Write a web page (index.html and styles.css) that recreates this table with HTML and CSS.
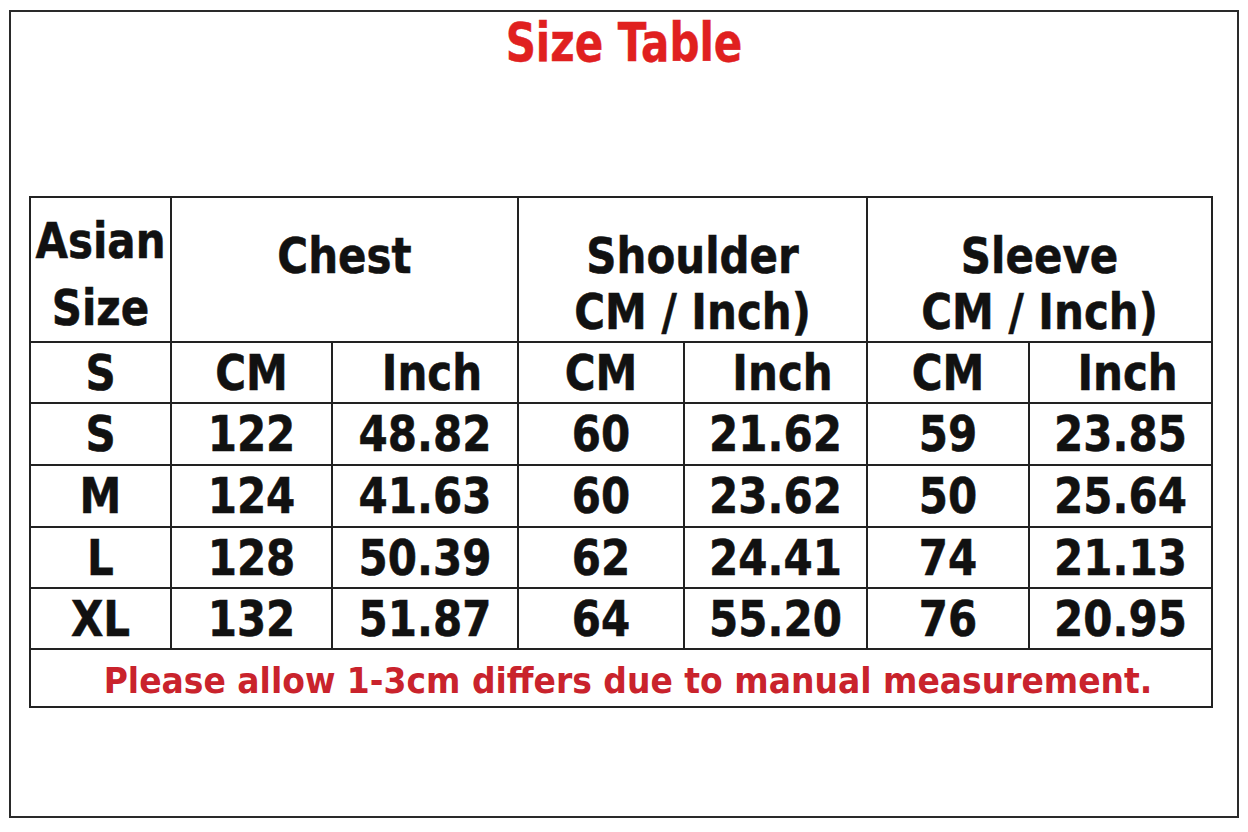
FILE: index.html
```html
<!DOCTYPE html>
<html lang="en">
<head>
<meta charset="utf-8">
<title>Size Table</title>
<link rel="stylesheet" href="styles.css">
</head>
<body>
<div class="frame">
  <h1 class="title"><span class="st">Size Table</span></h1>
  <table class="size-table">
    <colgroup>
      <col class="w-size">
      <col class="w-chest-cm">
      <col class="w-chest-in">
      <col class="w-sh-cm">
      <col class="w-sh-in">
      <col class="w-sl-cm">
      <col class="w-sl-in">
    </colgroup>
    <thead>
      <tr class="head">
        <th class="h-size"><span class="st">Asian</span><br><span class="st">Size</span></th>
        <th colspan="2" class="h-group"><span class="st">Chest</span></th>
        <th colspan="2" class="h-group"><span class="st">Shoulder</span><br><span class="st">CM / Inch)</span></th>
        <th colspan="2" class="h-group"><span class="st">Sleeve</span><br><span class="st">CM / Inch)</span></th>
      </tr>
      <tr class="sub">
        <th><span class="st">S</span></th>
        <th><span class="st">CM</span></th>
        <th class="inch"><span class="st">Inch</span></th>
        <th><span class="st">CM</span></th>
        <th class="inch"><span class="st">Inch</span></th>
        <th><span class="st">CM</span></th>
        <th class="inch"><span class="st">Inch</span></th>
      </tr>
    </thead>
    <tbody>
      <tr class="row">
        <td><span class="st">S</span></td>
        <td><span class="st">122</span></td>
        <td><span class="st">48.82</span></td>
        <td><span class="st">60</span></td>
        <td><span class="st">21.62</span></td>
        <td><span class="st">59</span></td>
        <td><span class="st">23.85</span></td>
      </tr>
      <tr class="row">
        <td><span class="st">M</span></td>
        <td><span class="st">124</span></td>
        <td><span class="st">41.63</span></td>
        <td><span class="st">60</span></td>
        <td><span class="st">23.62</span></td>
        <td><span class="st">50</span></td>
        <td><span class="st">25.64</span></td>
      </tr>
      <tr class="row row-short">
        <td><span class="st">L</span></td>
        <td><span class="st">128</span></td>
        <td><span class="st">50.39</span></td>
        <td><span class="st">62</span></td>
        <td><span class="st">24.41</span></td>
        <td><span class="st">74</span></td>
        <td><span class="st">21.13</span></td>
      </tr>
      <tr class="row row-short">
        <td><span class="st">XL</span></td>
        <td><span class="st">132</span></td>
        <td><span class="st">51.87</span></td>
        <td><span class="st">64</span></td>
        <td><span class="st">55.20</span></td>
        <td><span class="st">76</span></td>
        <td><span class="st">20.95</span></td>
      </tr>
    </tbody>
    <tfoot>
      <tr class="note">
        <td colspan="7"><span class="st-note">Please allow 1-3cm differs due to manual measurement.</span></td>
      </tr>
    </tfoot>
  </table>
</div>
</body>
</html>
```

FILE: styles.css
```css
html, body {
  margin: 0;
  padding: 0;
  background: #ffffff;
}

body {
  font-family: "DejaVu Sans", Verdana, sans-serif;
  font-weight: bold;
  color: #111111;
}

.frame {
  box-sizing: border-box;
  width: 1230px;
  height: 808px;
  margin: 10px 0 0 9px;
  border: 2px solid #2a2a2a;
}

.title {
  margin: 0;
  height: 62px;
  line-height: 62px;
  text-align: center;
  font-size: 42px;
  font-weight: bold;
  color: #e0201f;
}

.title .st {
  transform: scaleY(1.25);
  -webkit-text-stroke: 0.4px #e0201f;
}

.st {
  display: inline-block;
  transform: scaleY(1.2);
  -webkit-text-stroke: 0.5px #111111;
}

.size-table {
  border-collapse: collapse;
  table-layout: fixed;
  width: 1183px;
  margin: 122px 0 0 18px;
}

.w-size { width: 141px; }
.w-chest-cm { width: 161px; }
.w-chest-in { width: 186px; }
.w-sh-cm { width: 166px; }
.w-sh-in { width: 183px; }
.w-sl-cm { width: 162px; }
.w-sl-in { width: 183px; }

.size-table th,
.size-table td {
  border: 2px solid #222222;
  padding: 0;
  text-align: center;
  vertical-align: middle;
  font-size: 42px;
  font-weight: bold;
  line-height: 1;
}

.head {
  height: 144px;
}

.size-table .h-size {
  vertical-align: top;
  padding-top: 9px;
  line-height: 67px;
}

.size-table .h-group {
  vertical-align: top;
  padding-top: 30px;
  line-height: 56px;
}

.sub th {
  height: 59px;
}

.row td {
  height: 60px;
}

.row-short td {
  height: 59px;
}

.size-table .inch {
  padding-left: 14px;
}

.size-table .note td {
  height: 56px;
  padding-left: 14px;
}

.st-note {
  display: inline-block;
  font-size: 33px;
  color: #c9232c;
  transform: scaleY(1.08);
}
```
